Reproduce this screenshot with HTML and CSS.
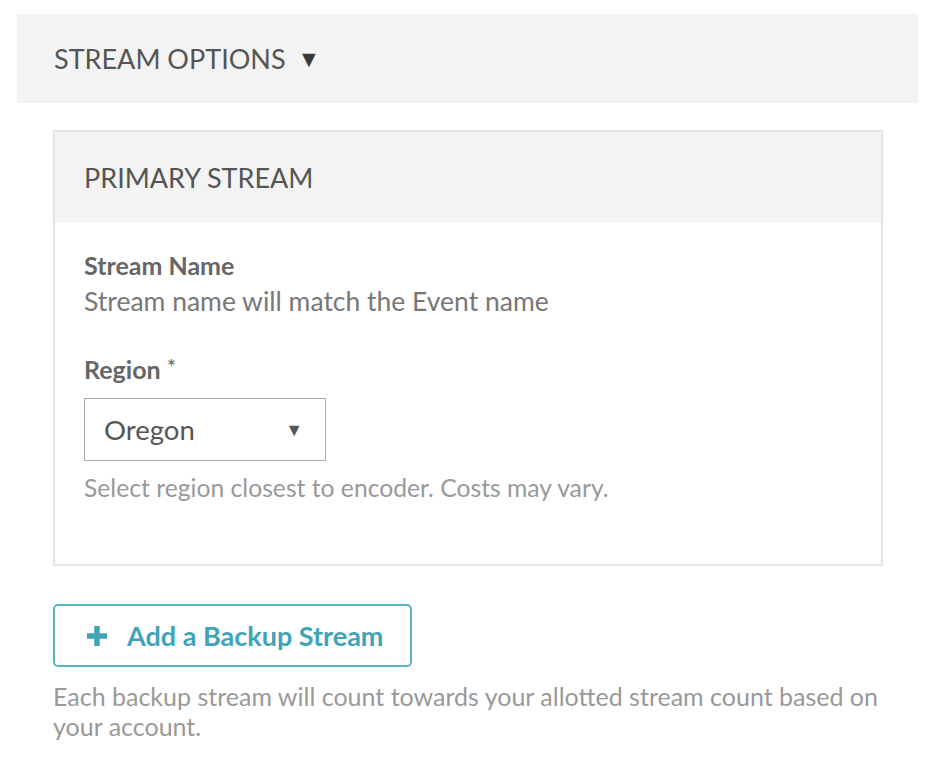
FILE: index.html
```html
<!DOCTYPE html>
<html>
<head>
<meta charset="utf-8">
<link rel="stylesheet" href="styles.css">
</head>
<body>
<div class="page">
  <div class="section-head">STREAM OPTIONS <span class="caret">&#9660;</span></div>
  <div class="content">
    <div class="card">
      <div class="card-head">PRIMARY STREAM</div>
      <div class="card-body">
        <div class="field">
          <div class="label">Stream Name</div>
          <div class="value">Stream name will match the Event name</div>
        </div>
        <div class="field">
          <div class="label">Region <span class="req">*</span></div>
          <div class="select">
            <span>Oregon</span>
            <span class="select-caret">&#9660;</span>
          </div>
          <div class="help">Select region closest to encoder. Costs may vary.</div>
        </div>
      </div>
    </div>
    <button class="add-btn">
      <svg class="plus" width="22" height="20" viewBox="0 0 22 20"><path d="M11 0v20M1 10h20" stroke="currentColor" stroke-width="5.5"/></svg>
      <span>Add a Backup Stream</span>
    </button>
    <p class="note">Each backup stream will count towards your allotted stream count based on your account.</p>
  </div>
</div>
</body>
</html>
```
FILE: styles.css
```css
html, body {
  margin: 0;
  padding: 0;
  background: #fff;
}
body {
  font-family: Lato, "Open Sans", sans-serif;
  color: #555;
}
.page {
  padding: 14px 14px 0 17px;
}
.section-head {
  background: #f3f3f3;
  height: 89px;
  display: flex;
  align-items: center;
  padding-left: 37px;
  font-size: 27px;
  color: #555;
}
.caret {
  font-size: 23px;
  margin-left: 12px;
  color: #3a3a3a;
}
.content {
  padding: 27px 35px 0 36px;
}
.card {
  border: 2px solid #e4e4e4;
}
.card-head {
  background: #f3f3f3;
  height: 90px;
  display: flex;
  align-items: center;
  padding-left: 29px;
  font-size: 27px;
  color: #555;
}
.card-body {
  padding: 25px 29px 58px;
}
.field + .field {
  margin-top: 32px;
}
.label {
  font-weight: bold;
  font-size: 25px;
  line-height: 36px;
  color: #666;
}
.req {
  font-weight: normal;
  font-size: 22px;
  vertical-align: top;
  line-height: 32px;
}
.value {
  font-size: 26.5px;
  line-height: 36px;
  color: #777;
}
.select {
  margin-top: 11px;
  box-sizing: border-box;
  width: 242px;
  height: 63px;
  border: 1px solid #aaa;
  display: flex;
  align-items: center;
  justify-content: space-between;
  padding: 0 22px 0 19px;
  font-size: 27.5px;
  color: #555;
}
.select-caret {
  font-size: 18px;
  color: #555;
}
.help {
  margin-top: 9px;
  font-size: 24.7px;
  line-height: 36px;
  color: #999;
}
.add-btn {
  margin-top: 38px;
  box-sizing: border-box;
  width: 359px;
  height: 63px;
  border: 2px solid #5ab3c3;
  border-radius: 5px;
  background: #fff;
  display: flex;
  align-items: center;
  padding: 0 0 0 31px;
  font-family: Lato, "Open Sans", sans-serif;
  font-weight: bold;
  font-size: 27px;
  color: #3fa4b7;
  cursor: pointer;
}
.plus {
  margin-right: 19px;
  color: #3fa4b7;
}
.note {
  margin: 14px 0 0;
  font-size: 25px;
  line-height: 30px;
  color: #999;
}
```
